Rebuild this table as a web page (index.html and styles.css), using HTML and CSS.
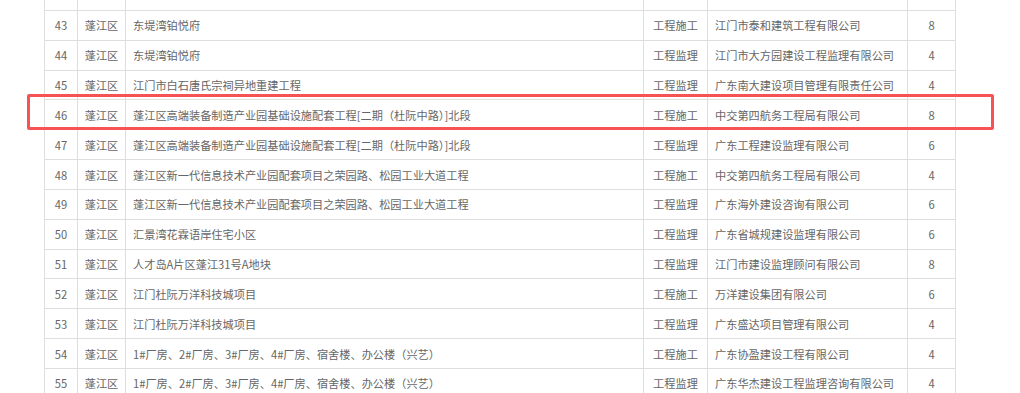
FILE: index.html
```html
<!DOCTYPE html>
<html lang="zh-CN">
<head>
<meta charset="utf-8">
<title>项目表</title>
<link rel="stylesheet" href="styles.css">
</head>
<body>
<div class="wrap">
  <table class="grid">
    <colgroup>
      <col class="c-no"><col class="c-area"><col class="c-proj"><col class="c-type"><col class="c-comp"><col class="c-num">
    </colgroup>
    <tbody>
      <tr><td class="ctr"></td><td class="ctr"></td><td></td><td class="ctr"></td><td></td><td class="ctr"></td></tr>
      <tr><td class="ctr">43</td><td class="ctr">蓬江区</td><td>东堤湾铂悦府</td><td class="ctr">工程施工</td><td>江门市泰和建筑工程有限公司</td><td class="ctr">8</td></tr>
      <tr><td class="ctr">44</td><td class="ctr">蓬江区</td><td>东堤湾铂悦府</td><td class="ctr">工程监理</td><td>江门市大方园建设工程监理有限公司</td><td class="ctr">4</td></tr>
      <tr><td class="ctr">45</td><td class="ctr">蓬江区</td><td>江门市白石唐氏宗祠异地重建工程</td><td class="ctr">工程监理</td><td>广东南大建设项目管理有限责任公司</td><td class="ctr">4</td></tr>
      <tr><td class="ctr">46</td><td class="ctr">蓬江区</td><td>蓬江区高端装备制造产业园基础设施配套工程[二期（杜阮中路）]北段</td><td class="ctr">工程施工</td><td>中交第四航务工程局有限公司</td><td class="ctr">8</td></tr>
      <tr><td class="ctr">47</td><td class="ctr">蓬江区</td><td>蓬江区高端装备制造产业园基础设施配套工程[二期（杜阮中路）]北段</td><td class="ctr">工程监理</td><td>广东工程建设监理有限公司</td><td class="ctr">6</td></tr>
      <tr><td class="ctr">48</td><td class="ctr">蓬江区</td><td>蓬江区新一代信息技术产业园配套项目之荣园路、松园工业大道工程</td><td class="ctr">工程施工</td><td>中交第四航务工程局有限公司</td><td class="ctr">4</td></tr>
      <tr><td class="ctr">49</td><td class="ctr">蓬江区</td><td>蓬江区新一代信息技术产业园配套项目之荣园路、松园工业大道工程</td><td class="ctr">工程监理</td><td>广东海外建设咨询有限公司</td><td class="ctr">6</td></tr>
      <tr><td class="ctr">50</td><td class="ctr">蓬江区</td><td>汇景湾花霖语岸住宅小区</td><td class="ctr">工程监理</td><td>广东省城规建设监理有限公司</td><td class="ctr">6</td></tr>
      <tr><td class="ctr">51</td><td class="ctr">蓬江区</td><td>人才岛A片区蓬江31号A地块</td><td class="ctr">工程监理</td><td>江门市建设监理顾问有限公司</td><td class="ctr">8</td></tr>
      <tr><td class="ctr">52</td><td class="ctr">蓬江区</td><td>江门杜阮万洋科技城项目</td><td class="ctr">工程施工</td><td>万洋建设集团有限公司</td><td class="ctr">6</td></tr>
      <tr><td class="ctr">53</td><td class="ctr">蓬江区</td><td>江门杜阮万洋科技城项目</td><td class="ctr">工程监理</td><td>广东盛达项目管理有限公司</td><td class="ctr">4</td></tr>
      <tr><td class="ctr">54</td><td class="ctr">蓬江区</td><td>1#厂房、2#厂房、3#厂房、4#厂房、宿舍楼、办公楼（兴艺）</td><td class="ctr">工程施工</td><td>广东协盈建设工程有限公司</td><td class="ctr">4</td></tr>
      <tr><td class="ctr">55</td><td class="ctr">蓬江区</td><td>1#厂房、2#厂房、3#厂房、4#厂房、宿舍楼、办公楼（兴艺）</td><td class="ctr">工程监理</td><td>广东华杰建设工程监理咨询有限公司</td><td class="ctr">4</td></tr>
    </tbody>
  </table>
  <div class="highlight"></div>
</div>
</body>
</html>
```

FILE: styles.css
```css
html, body {
  margin: 0;
  padding: 0;
  background: #ffffff;
  overflow: hidden;
}

body {
  width: 1020px;
  height: 393px;
  font-family: "Noto Sans CJK SC", "Noto Sans", sans-serif;
  font-size: 11.2px;
  color: #666666;
}

.wrap {
  position: relative;
  width: 1020px;
  height: 393px;
  overflow: hidden;
}

.grid {
  border-collapse: collapse;
  table-layout: fixed;
  width: 912px;
  margin-left: 44px;
  margin-top: -19.83px;
}

.c-no { width: 33px; }
.c-area { width: 48px; }
.c-proj { width: 518px; }
.c-type { width: 64px; }
.c-comp { width: 200px; }
.c-num { width: 48px; }

.grid tr {
  height: 29.83px;
}

.grid td {
  border: 1px solid #dedede;
  padding: 0 0 0 7px;
  white-space: nowrap;
  overflow: hidden;
  line-height: 16px;
  vertical-align: middle;
}

.grid td.ctr {
  text-align: center;
  padding: 0;
}

.highlight {
  position: absolute;
  left: 27px;
  top: 94px;
  width: 961px;
  height: 30px;
  border: 3px solid #f65454;
  border-radius: 2px;
}
```
